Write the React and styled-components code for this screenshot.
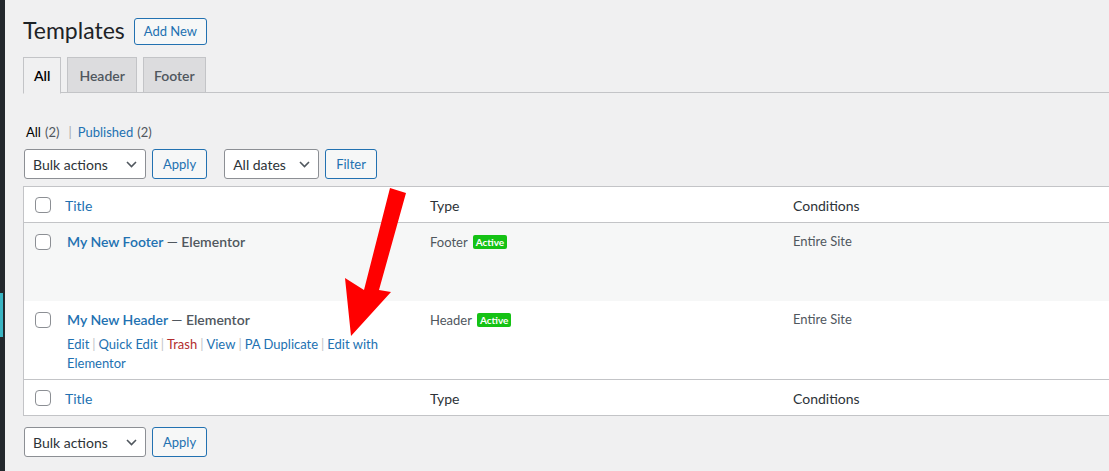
import React from "react";
import styled, { createGlobalStyle } from "styled-components";

const Global = createGlobalStyle`
  html, body { margin: 0; padding: 0; background: #f0f0f1; }
  body { font-family: Lato, "Liberation Sans", sans-serif; color: #1d2327; font-size: 13px; overflow: hidden; }
  * { box-sizing: border-box; }
`;

const Page = styled.div`
  position: relative;
  display: flex;
  width: 1109px;
  height: 471px;
  overflow: hidden;
`;

const Strip = styled.div`
  width: 5px;
  flex: none;
  background: #23282d;
  display: flex;
  flex-direction: column;
`;

const StripMark = styled.div`
  margin-top: 293px;
  width: 3px;
  height: 44px;
  background: #3bb5c4;
`;

const Main = styled.div`
  flex: 1;
  padding: 15px 0 0 18px;
  min-width: 0;
`;

const HeadRow = styled.div`
  display: flex;
  align-items: center;
  height: 32px;
  gap: 9px;
`;

const H1 = styled.h1`
  margin: 0;
  font-size: 23px;
  font-weight: 400;
  line-height: 1.3;
  color: #1d2327;
`;

const OutlineButton = styled.button`
  font-family: inherit;
  font-size: 13px;
  color: #2271b1;
  background: #f6f7f7;
  border: 1px solid #2271b1;
  border-radius: 3px;
  height: ${(p) => (p.$tall ? "30px" : "27px")};
  padding: 0 ${(p) => (p.$tall ? "10px" : "9px")};
  line-height: 1;
  cursor: pointer;
`;

const Tabs = styled.div`
  margin-top: 10px;
  display: flex;
  gap: 6px;
  border-bottom: 1px solid #c3c4c7;
  height: 36px;
`;

const Tab = styled.div`
  padding: 0 ${(p) => p.$px || 10}px;
  display: flex;
  align-items: center;
  font-size: 14px;
  font-weight: 600;
  border: 1px solid #c3c4c7;
  border-bottom-color: ${(p) => (p.$active ? "#f0f0f1" : "#c3c4c7")};
  background: ${(p) => (p.$active ? "#f0f0f1" : "#dcdcde")};
  color: ${(p) => (p.$active ? "#000" : "#50575e")};
  height: ${(p) => (p.$active ? "37px" : "36px")};
`;

const SubNav = styled.div`
  margin-top: 28px;
  padding-left: 3px;
  font-size: 13px;
  line-height: 22px;
  display: flex;
  gap: 4px;
  color: #50575e;
`;

const Current = styled.span`
  color: #000;
  font-weight: 400;
`;

const Count = styled.span`
  color: #50575e;
`;

const Link = styled.span`
  color: #2271b1;
`;

const Sep = styled.span`
  color: #a7aaad;
  margin: 0 2px 0 5px;
`;

const TableNav = styled.div`
  display: flex;
  align-items: center;
  gap: 6px;
  margin-top: ${(p) => p.$mt || "6px"};
  height: 30px;
  margin-left: 1px;
`;

const Select = styled.div`
  height: 30px;
  width: ${(p) => p.$w}px;
  border: 1px solid #8c8f94;
  border-radius: 3px;
  background: #fff;
  display: flex;
  align-items: center;
  justify-content: space-between;
  padding: 0 8px 0 8px;
  font-size: 14px;
  color: #2c3338;
  margin-left: ${(p) => p.$ml || 0}px;
`;

const Table = styled.div`
  margin-top: 7px;
  margin-right: -20px;
  border: 1px solid #c3c4c7;
  border-right: none;
  background: #fff;
`;

const Row = styled.div`
  display: grid;
  grid-template-columns: 31px 365px 363px 1fr;
  height: ${(p) => p.$h}px;
  background: ${(p) => p.$bg || "#fff"};
  border-bottom: ${(p) => (p.$bb ? "1px solid #c3c4c7" : "none")};
  border-top: ${(p) => (p.$bt ? "1px solid #c3c4c7" : "none")};
`;

const Cell = styled.div`
  padding: ${(p) => p.$pt}px 10px 0 ${(p) => p.$pl || 10}px;
  font-size: ${(p) => p.$fs || 14}px;
  line-height: ${(p) => p.$lh || 21}px;
  color: ${(p) => p.$color || "#1d2327"};
  white-space: nowrap;
`;

const HeadText = styled.span`
  color: #2c3338;
`;

const Check = styled.span`
  display: inline-block;
  width: 16px;
  height: 16px;
  border: 1px solid #8c8f94;
  border-radius: 4px;
  background: #fff;
  margin-top: ${(p) => p.$mt}px;
`;

const TitleLink = styled.span`
  color: #2271b1;
  font-weight: 600;
`;

const TitleRest = styled.span`
  color: #50575e;
  font-weight: 600;
`;

const Actions = styled.div`
  margin-top: 5px;
  font-size: 13px;
  line-height: 19px;
  color: #2271b1;
`;

const Action = styled.span`
  color: ${(p) => (p.$danger ? "#b32d2e" : "#2271b1")};
`;

const ActSep = styled.span`
  color: #c3c4c7;
  margin: 0 3px;
`;

const TypeText = styled.span`
  color: #50575e;
  font-size: 13px;
`;

const Badge = styled.span`
  display: inline-block;
  margin-left: 5px;
  background: #15c215;
  color: #fff;
  font-size: 10px;
  line-height: 14px;
  padding: 0 3px;
  border-radius: 2px;
  vertical-align: 1px;
  font-weight: 700;
`;

const ArrowSvg = styled.svg`
  position: absolute;
  left: 0;
  top: 0;
  pointer-events: none;
`;

const Chevron = () => (
  <svg width="11" height="7" viewBox="0 0 11 7">
    <path d="M1 1l4.5 4.5L10 1" fill="none" stroke="#50575e" strokeWidth="1.6" />
  </svg>
);

const RowActions = () => (
  <Actions>
    <Action>Edit</Action>
    <ActSep>|</ActSep>
    <Action>Quick Edit</Action>
    <ActSep>|</ActSep>
    <Action $danger>Trash</Action>
    <ActSep>|</ActSep>
    <Action>View</Action>
    <ActSep>|</ActSep>
    <Action>PA Duplicate</Action>
    <ActSep>|</ActSep>
    <Action>Edit with</Action>
    <br />
    <Action>Elementor</Action>
  </Actions>
);

const HeaderCells = ({ pt }) => (
  <>
    <Cell $pl={11} $pt={pt + 2}>
      <Check $mt={0} />
    </Cell>
    <Cell $pt={pt}>
      <Link>Title</Link>
    </Cell>
    <Cell $pt={pt}>
      <HeadText>Type</HeadText>
    </Cell>
    <Cell $pt={pt}>
      <HeadText>Conditions</HeadText>
    </Cell>
  </>
);

export default function App() {
  return (
    <>
      <Global />
      <Page>
        <Strip>
          <StripMark />
        </Strip>
        <Main>
          <HeadRow>
            <H1>Templates</H1>
            <OutlineButton>Add New</OutlineButton>
          </HeadRow>
          <Tabs>
            <Tab $active>All</Tab>
            <Tab $px={11}>Header</Tab>
            <Tab>Footer</Tab>
          </Tabs>
          <SubNav>
            <Current>All</Current>
            <Count>(2)</Count>
            <Sep>|</Sep>
            <Link>Published</Link>
            <Count>(2)</Count>
          </SubNav>
          <TableNav>
            <Select $w={122}>
              Bulk actions <Chevron />
            </Select>
            <OutlineButton $tall>Apply</OutlineButton>
            <Select $w={95} $ml={11}>
              All dates <Chevron />
            </Select>
            <OutlineButton $tall>Filter</OutlineButton>
          </TableNav>
          <Table>
            <Row $h={36} $bb>
              <HeaderCells pt={8} />
            </Row>
            <Row $h={78} $bg="#f6f7f7">
              <Cell $pl={11} $pt={11}>
                <Check $mt={0} />
              </Cell>
              <Cell $pt={8} $pl={12}>
                <TitleLink>My New Footer</TitleLink>
                <TitleRest> — Elementor</TitleRest>
              </Cell>
              <Cell $pt={8}>
                <TypeText>Footer</TypeText>
                <Badge>Active</Badge>
              </Cell>
              <Cell $pt={8} $fs={13} $color="#50575e">Entire Site</Cell>
            </Row>
            <Row $h={78}>
              <Cell $pl={11} $pt={11}>
                <Check $mt={0} />
              </Cell>
              <Cell $pt={8} $pl={12}>
                <TitleLink>My New Header</TitleLink>
                <TitleRest> — Elementor</TitleRest>
                <RowActions />
              </Cell>
              <Cell $pt={8}>
                <TypeText>Header</TypeText>
                <Badge>Active</Badge>
              </Cell>
              <Cell $pt={8} $fs={13} $color="#50575e">Entire Site</Cell>
            </Row>
            <Row $h={36} $bt>
              <HeaderCells pt={8} />
            </Row>
          </Table>
          <TableNav $mt="11px">
            <Select $w={122}>
              Bulk actions <Chevron />
            </Select>
            <OutlineButton $tall>Apply</OutlineButton>
          </TableNav>
        </Main>
        <ArrowSvg width="1109" height="471" viewBox="0 0 1109 471">
          <polygon
            points="390,188 406,193 379,290 391,292 351,336 345,278 364,290"
            fill="#ff0000"
          />
        </ArrowSvg>
      </Page>
    </>
  );
}
